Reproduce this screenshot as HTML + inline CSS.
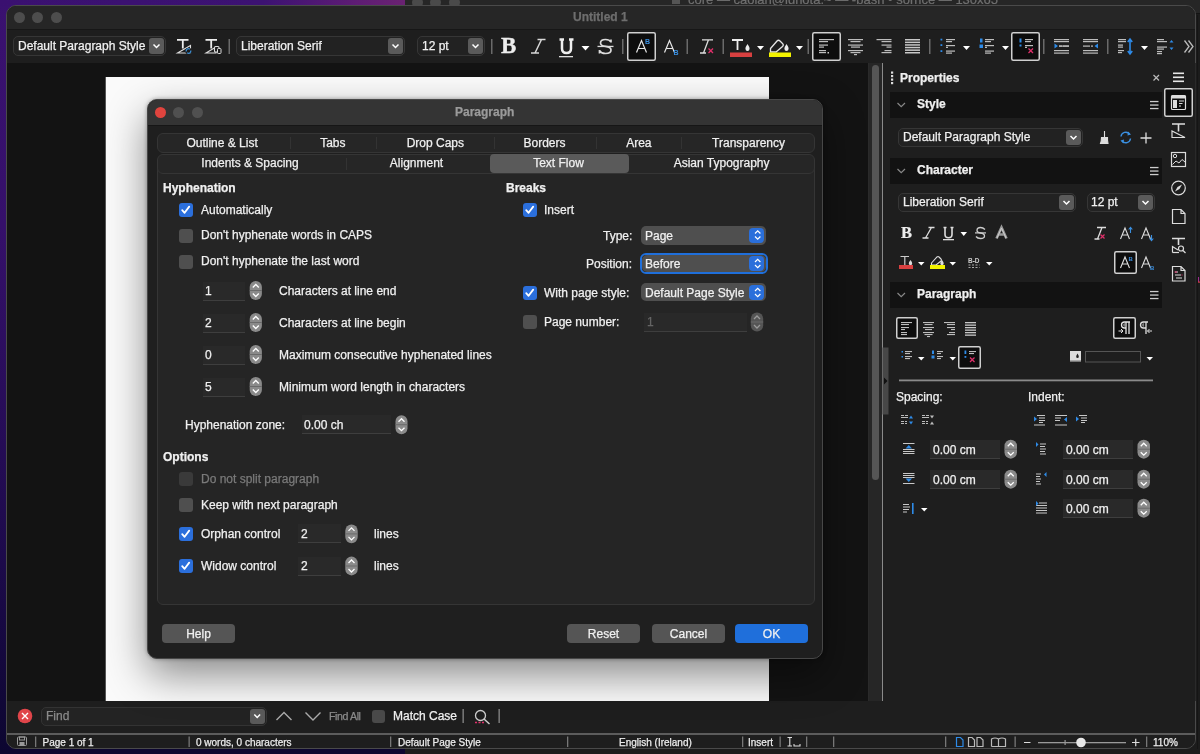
<!DOCTYPE html>
<html><head><meta charset="utf-8">
<style>
*{box-sizing:border-box;margin:0;padding:0}
html,body{width:1200px;height:754px;overflow:hidden;background:#1b1b1b;font-family:"Liberation Sans",sans-serif;font-size:12px;color:#f0f0f0}
body{will-change:transform}
.a{position:absolute}
.t{position:absolute;white-space:nowrap;line-height:14px;height:14px;-webkit-text-stroke:0.25px currentColor}
.b{font-weight:bold}
#desk{left:0;top:0;width:405px;height:754px;background:linear-gradient(to bottom,#3a1170 0,#35106a 30%,#1c0a4a 75%,#0c0630 100%)}
#desktop{left:0;top:0;width:405px;height:6px;background:linear-gradient(to right,#3a1070 0,#3c1272 65%,#5e1c74 88%,#6a2272 100%)}
#desk2{left:0;top:749px;width:405px;height:5px;background:#0c0630}
#term{left:405px;top:0;width:795px;height:754px;background:#1c1c1c}
#termtb{left:405px;top:0;width:795px;height:14px;background:#262626;border-bottom:1px solid #141414}
#win{left:6px;top:5px;width:1190px;height:744px;background:#1e1e1e;border:1px solid #4a4a4a;border-radius:10px;overflow:hidden}
#tbar{left:0;top:0;width:1190px;height:24px;background:#262626;border-bottom:1px solid #171717}
.tl{position:absolute;width:11px;height:11px;border-radius:50%;background:#4d4d4d}
#doc{left:0;top:57px;width:861px;height:638px;background:#131313}
#page{left:98px;top:14px;width:664px;height:624px;background:#fafafa;border-left:1px solid #555}
#scroll{left:861px;top:57px;width:15px;height:638px;background:#262626;border-left:1px solid #2a2a2a}
#side{left:875px;top:57px;width:315px;height:638px;background:#1e1e1e;border-left:1.5px solid #8a8a8a}
.band{position:absolute;left:6px;width:273px;height:26px;background:#111}
#find{left:0;top:695px;width:1190px;height:32px;background:#1e1e1e}
#status{left:0;top:727px;width:1190px;height:17px;background:#1e1e1e;border-top:2px solid #5c5c5c}
.combo{position:absolute;border:1px solid #333;border-radius:5px;background:#222}
.dd{position:absolute;width:15px;height:15px;background:#5a5a5a;border-radius:3px}
.sep{position:absolute;width:2px;background:#777}
/* dialog */
#dlg{left:147px;top:99px;width:676px;height:560px;background:#1f1f1f;border:1px solid #474747;border-radius:10px;box-shadow:0 16px 40px rgba(0,0,0,.45),0 0 4px rgba(0,0,0,.35);overflow:hidden}
#dtitle{left:0;top:0;width:674px;height:26px;background:#343434;border-bottom:1px solid #161616}
.tabrow{position:absolute;left:9px;width:658px;height:20px;background:#262626;border:1px solid #353535;border-radius:6px}
.tab{position:absolute;top:0;height:18px;line-height:18px;text-align:center;white-space:nowrap}
#frame{left:9px;top:61px;width:658px;height:444px;background:#252525;border:1px solid #353535;border-radius:6px}
.cb{position:absolute;width:13.5px;height:13.5px;border-radius:3px;background:#4f4f4f}
.cb.on{background:#2b6fdc}
.field{position:absolute;background:#292929;border-bottom:1px solid #3e3e3e;height:19px}
.spin{position:absolute;width:12px;height:20px;background:#777;border-radius:6px}
.btn{position:absolute;height:18.5px;width:73px;background:#555;border-radius:4px;text-align:center;line-height:20.5px;color:#f0f0f0;-webkit-text-stroke:0.25px currentColor}
.pop{position:absolute;height:19px;background:#4f4f4f;border-radius:5px}
.popb{position:absolute;right:2px;top:2px;width:15px;height:15px;border-radius:4px;background:#2a6fdb}
</style></head><body>
<div id="desk" class="a"></div>
<div id="desk2" class="a"></div>
<div id="term" class="a"></div>
<div id="desktop" class="a"></div>
<div id="termtb" class="a"></div>
<div class="tl" style="left:412px;top:-3px;background:#4a4a4a"></div>
<div class="tl" style="left:430px;top:-3px;background:#4a4a4a"></div>
<div class="tl" style="left:449px;top:-3px;background:#4a4a4a"></div>
<div class="a" style="left:672px;top:-3px;width:8px;height:7px;background:#555"></div>
<div class="a" style="left:688px;top:-7px;white-space:nowrap;font-size:13px;line-height:14px;color:#707070;-webkit-text-stroke:0.2px #707070">core — caolan@idnota:~ — -bash • sorrice — 130x65</div>

<div id="win" class="a">
  <div id="tbar" class="a">
    <div class="tl" style="left:7px;top:6px"></div>
    <div class="tl" style="left:25px;top:6px"></div>
    <div class="tl" style="left:43.5px;top:6px"></div>
    <div class="t b" style="left:566px;top:4px;color:#6e6e6e">Untitled 1</div>
  </div>
  <div id="doc" class="a">
    <div id="page" class="a"></div>
  </div>
  <div id="scroll" class="a"><div class="a" style="left:3px;top:2px;width:7px;height:415px;border-radius:4px;background:#555"></div></div>
  <div id="side" class="a"></div>
  <div id="find" class="a"></div>
  <div id="status" class="a"></div>
</div>
<div class="combo" style="left:13px;top:36px;width:153px;height:20px;background:#222;border-color:#363636"></div>
<div class="dd" style="left:149px;top:38px;height:16px"></div>
<div class="t " style="left:18px;top:38.5px;">Default Paragraph Style</div>
<div class="combo" style="left:236px;top:36px;width:169px;height:20px;background:#222;border-color:#363636"></div>
<div class="dd" style="left:388px;top:38px;height:16px"></div>
<div class="t " style="left:241px;top:38.5px;">Liberation Serif</div>
<div class="combo" style="left:417px;top:36px;width:68px;height:20px;background:#222;border-color:#363636"></div>
<div class="dd" style="left:468px;top:38px;height:16px"></div>
<div class="t " style="left:422px;top:38.5px;">12 pt</div>
<div class="t" style="left:501px;top:34px;height:24px;line-height:24px;font-family:'Liberation Serif',serif;font-weight:bold;font-size:23px;color:#eee;-webkit-text-stroke:0.3px #eee">B</div>
<div class="t b" style="left:900px;top:71px;">Properties</div>
<div class="a" style="left:890px;top:92px;width:272px;height:26px;background:#121212"></div>
<div class="t b" style="left:917px;top:97.3px;">Style</div>
<div class="a" style="left:890px;top:158px;width:272px;height:26px;background:#121212"></div>
<div class="t b" style="left:917px;top:163.3px;">Character</div>
<div class="a" style="left:890px;top:282px;width:272px;height:26px;background:#121212"></div>
<div class="t b" style="left:917px;top:287.3px;">Paragraph</div>
<div class="combo" style="left:898px;top:128px;width:185px;height:19px;background:#222;border-color:#363636"></div>
<div class="dd" style="left:1066px;top:130px;height:15px"></div>
<div class="t " style="left:903px;top:130px;">Default Paragraph Style</div>
<div class="combo" style="left:898px;top:193px;width:178px;height:19px;background:#222;border-color:#363636"></div>
<div class="dd" style="left:1059px;top:195px;height:15px"></div>
<div class="t " style="left:903px;top:195px;">Liberation Serif</div>
<div class="combo" style="left:1087px;top:193px;width:68px;height:19px;background:#222;border-color:#363636"></div>
<div class="dd" style="left:1138px;top:195px;height:15px"></div>
<div class="t " style="left:1091px;top:195px;">12 pt</div>
<div class="t" style="left:901px;top:222.5px;height:20px;line-height:20px;font-family:'Liberation Serif',serif;font-weight:bold;font-size:16.5px;color:#eee;-webkit-text-stroke:0.2px #eee">B</div>
<div class="t " style="left:896px;top:389.7px;">Spacing:</div>
<div class="t " style="left:1028px;top:389.7px;">Indent:</div>
<div class="field" style="left:930px;top:440px;width:70px;height:18.5px"></div>
<div class="t " style="left:933px;top:442.55px;">0.00 cm</div>
<div class="field" style="left:930px;top:470px;width:70px;height:18.5px"></div>
<div class="t " style="left:933px;top:472.55px;">0.00 cm</div>
<div class="field" style="left:1063px;top:440px;width:70px;height:18.5px"></div>
<div class="t " style="left:1066px;top:442.55px;">0.00 cm</div>
<div class="field" style="left:1063px;top:470px;width:70px;height:18.5px"></div>
<div class="t " style="left:1066px;top:472.55px;">0.00 cm</div>
<div class="field" style="left:1063px;top:499px;width:70px;height:18.5px"></div>
<div class="t " style="left:1066px;top:501.55px;">0.00 cm</div>
<div class="combo" style="left:41px;top:707px;width:226px;height:19px;background:#232323;border-color:#333"></div>
<div class="t " style="left:46px;top:709px;color:#8a8a8a">Find</div>
<div class="dd" style="left:250px;top:709px;height:14.5px;width:14.5px"></div>
<div class="t" style="left:329px;top:709px;font-size:10.6px;letter-spacing:-0.4px;color:#8c8c8c">Find All</div>
<div class="cb" style="left:372px;top:709.5px;width:12.5px;height:13px;background:#4a4a4a"></div>
<div class="t " style="left:393px;top:708.5px;color:#f2f2f2">Match Case</div>
<div class="t" style="left:42.5px;top:736px;font-size:10px;line-height:14px;color:#ececec;">Page 1 of 1</div>
<div class="t" style="left:196px;top:736px;font-size:10px;line-height:14px;color:#ececec;">0 words, 0 characters</div>
<div class="t" style="left:398px;top:736px;font-size:10px;line-height:14px;color:#ececec;">Default Page Style</div>
<div class="t" style="left:619px;top:736px;font-size:10px;line-height:14px;color:#ececec;">English (Ireland)</div>
<div class="t" style="left:748px;top:736px;font-size:10px;line-height:14px;color:#ececec;">Insert</div>
<div class="t" style="left:1153px;top:736px;font-size:10px;line-height:14px;color:#ececec;">110%</div>

<div id="dlg" class="a">
  <div id="dtitle" class="a">
    <div class="tl" style="left:7px;top:6.5px;background:#e0443e"></div>
    <div class="tl" style="left:25px;top:6.5px;background:#505050"></div>
    <div class="tl" style="left:43.5px;top:6.5px;background:#505050"></div>
    <div class="t b" style="left:307px;top:5px;color:#9a9a9a">Paragraph</div>
  </div>
  <div class="tabrow" style="top:33px">
    <div class="a" style="left:132px;top:3px;width:1px;height:12px;background:#333"></div>
    <div class="a" style="left:218px;top:3px;width:1px;height:12px;background:#333"></div>
    <div class="a" style="left:336px;top:3px;width:1px;height:12px;background:#333"></div>
    <div class="a" style="left:438px;top:3px;width:1px;height:12px;background:#333"></div>
    <div class="a" style="left:523px;top:3px;width:1px;height:12px;background:#333"></div>
    <div class="t" style="left:28.4px;top:1.5px">Outline &amp; List</div>
    <div class="t" style="left:162.2px;top:1.5px">Tabs</div>
    <div class="t" style="left:248.7px;top:1.5px">Drop Caps</div>
    <div class="t" style="left:365.5px;top:1.5px">Borders</div>
    <div class="t" style="left:468.2px;top:1.5px">Area</div>
    <div class="t" style="left:554.1px;top:1.5px">Transparency</div>
  </div>
  <div id="frame" class="a"></div>
  <div class="tabrow" style="top:54px">
    <div class="a" style="left:188px;top:3px;width:1px;height:12px;background:#333"></div>
    <div class="t" style="left:43.3px;top:1px">Indents &amp; Spacing</div>
    <div class="t" style="left:231.8px;top:1px">Alignment</div>
    <div class="a" style="left:332px;top:-1px;width:139px;height:19px;background:#5a5a5a;border-radius:4px"></div>
    <div class="t" style="left:375.2px;top:1px">Text Flow</div>
    <div class="t" style="left:515.7px;top:1px">Asian Typography</div>
  </div>
</div>


<!-- dialog contents -->
<div class="t b" style="left:163px;top:181px">Hyphenation</div>
<div class="cb on" style="left:179px;top:203px"><svg width="13" height="13" class="a" style="left:0;top:0"><path d="M3.2 7.2 L5.6 9.8 L10.2 3.6" stroke="#fff" stroke-width="1.8" fill="none" stroke-linecap="round" stroke-linejoin="round"/></svg></div>
<div class="t" style="left:201px;top:203px">Automatically</div>
<div class="cb" style="left:179px;top:229px"></div>
<div class="t" style="left:201px;top:228px">Don't hyphenate words in CAPS</div>
<div class="cb" style="left:179px;top:255px"></div>
<div class="t" style="left:201px;top:254px">Don't hyphenate the last word</div>

<div class="field" style="left:203px;top:282px;width:42px"></div><div class="t" style="left:205px;top:284px">1</div>
<div class="t" style="left:279px;top:284px">Characters at line end</div>
<div class="field" style="left:203px;top:314px;width:42px"></div><div class="t" style="left:205px;top:316px">2</div>
<div class="t" style="left:279px;top:316px">Characters at line begin</div>
<div class="field" style="left:203px;top:346px;width:42px"></div><div class="t" style="left:205px;top:348px">0</div>
<div class="t" style="left:279px;top:348px">Maximum consecutive hyphenated lines</div>
<div class="field" style="left:203px;top:378px;width:42px"></div><div class="t" style="left:205px;top:380px">5</div>
<div class="t" style="left:279px;top:380px">Minimum word length in characters</div>

<div class="t" style="left:185px;top:418px">Hyphenation zone:</div>
<div class="field" style="left:302px;top:415px;width:89px"></div><div class="t" style="left:304px;top:418px">0.00 ch</div>

<div class="t b" style="left:163px;top:450px">Options</div>
<div class="cb" style="left:179px;top:472px;background:#3a3a3a"></div>
<div class="t" style="left:201px;top:472px;color:#7a7a7a">Do not split paragraph</div>
<div class="cb" style="left:179px;top:498px"></div>
<div class="t" style="left:201px;top:498px">Keep with next paragraph</div>
<div class="cb on" style="left:179px;top:527px"><svg width="13" height="13" class="a" style="left:0;top:0"><path d="M3.2 7.2 L5.6 9.8 L10.2 3.6" stroke="#fff" stroke-width="1.8" fill="none" stroke-linecap="round" stroke-linejoin="round"/></svg></div>
<div class="t" style="left:201px;top:527px">Orphan control</div>
<div class="field" style="left:298px;top:524px;width:43px"></div><div class="t" style="left:301px;top:527px">2</div>
<div class="t" style="left:374px;top:527px">lines</div>
<div class="cb on" style="left:179px;top:559px"><svg width="13" height="13" class="a" style="left:0;top:0"><path d="M3.2 7.2 L5.6 9.8 L10.2 3.6" stroke="#fff" stroke-width="1.8" fill="none" stroke-linecap="round" stroke-linejoin="round"/></svg></div>
<div class="t" style="left:201px;top:559px">Widow control</div>
<div class="field" style="left:298px;top:557px;width:43px;height:18.5px"></div><div class="t" style="left:301px;top:559px">2</div>
<div class="t" style="left:374px;top:559px">lines</div>

<div class="t b" style="left:506px;top:181px">Breaks</div>
<div class="cb on" style="left:523px;top:203px"><svg width="13" height="13" class="a" style="left:0;top:0"><path d="M3.2 7.2 L5.6 9.8 L10.2 3.6" stroke="#fff" stroke-width="1.8" fill="none" stroke-linecap="round" stroke-linejoin="round"/></svg></div>
<div class="t" style="left:544px;top:203px">Insert</div>
<div class="t" style="left:603px;top:229px">Type:</div>
<div class="pop" style="left:641px;top:226px;width:125px"><div class="popb"></div></div>
<div class="t" style="left:645px;top:229px">Page</div>
<div class="t" style="left:586px;top:257px">Position:</div>
<div class="a" style="left:640px;top:253px;width:128px;height:21px;border:2px solid #1f6fdb;border-radius:6px"></div>
<div class="pop" style="left:642px;top:255px;width:124px;height:17px"><div class="popb" style="top:1px"></div></div>
<div class="t" style="left:645px;top:257px">Before</div>
<div class="cb on" style="left:523px;top:286px"><svg width="13" height="13" class="a" style="left:0;top:0"><path d="M3.2 7.2 L5.6 9.8 L10.2 3.6" stroke="#fff" stroke-width="1.8" fill="none" stroke-linecap="round" stroke-linejoin="round"/></svg></div>
<div class="t" style="left:544px;top:286px">With page style:</div>
<div class="pop" style="left:641px;top:283px;width:125px;height:18px"><div class="popb" style="top:1.5px"></div></div>
<div class="t" style="left:645px;top:286px">Default Page Style</div>
<div class="cb" style="left:523px;top:315px"></div>
<div class="t" style="left:544px;top:315px">Page number:</div>
<div class="field" style="left:644px;top:313px;width:103px"></div><div class="t" style="left:647px;top:315px;color:#666">1</div>

<div class="btn" style="left:162px;top:624px">Help</div>
<div class="btn" style="left:567px;top:624px">Reset</div>
<div class="btn" style="left:652px;top:624px">Cancel</div>
<div class="btn" style="left:735px;top:624px;background:#1f6fdb">OK</div>
<svg class="a" style="left:0;top:0" width="1200" height="754" shape-rendering="geometricPrecision"><path d="M153.5 44.5 L156.5 47.5 L159.5 44.5" stroke="#fff" stroke-width="1.5" fill="none"/>
<path d="M177 39.8 H188.5 M182.8 39.8 V48.5" stroke="#eee" stroke-width="1.8" fill="none"/>
<path d="M177.5 53 L190.5 45.5 V53 Z" stroke="#ddd" stroke-width="1.1" fill="none"/>
<circle cx="188.5" cy="51" r="3.2" fill="#1d1d1d"/><path d="M186.3 51.5 A2.2 2.2 0 0 1 189.8 49.2 M190.7 50.5 A2.2 2.2 0 0 1 187.2 52.8" stroke="#3a8fd6" stroke-width="1.3" fill="none"/>
<path d="M205.5 39.8 H217 M211.2 39.8 V48.5" stroke="#eee" stroke-width="1.8" fill="none"/>
<path d="M206 53 L216 47 V53 Z" stroke="#ddd" stroke-width="1.1" fill="none"/>
<rect x="214.5" y="46.5" width="4.5" height="5.5" rx="1" stroke="#ddd" stroke-width="1.1" fill="#1d1d1d"/><rect x="217.5" y="48.5" width="3.5" height="5" rx="0.8" stroke="#ddd" stroke-width="1" fill="#1d1d1d"/>
<rect x="228.5" y="39" width="1.5" height="15" fill="#6a6a6a"/>
<path d="M392.5 44.5 L395.5 47.5 L398.5 44.5" stroke="#fff" stroke-width="1.5" fill="none"/>
<path d="M472.5 44.5 L475.5 47.5 L478.5 44.5" stroke="#fff" stroke-width="1.5" fill="none"/>
<rect x="491" y="39" width="1.5" height="15" fill="#6a6a6a"/>
<path d="M537.5 39.5 H545.5 M541.5 39.5 L535 53 M531 53 H539" stroke="#d8d8d8" stroke-width="1.5" fill="none"/>
<path d="M562 39.5 V48.5 Q562 53 566.5 53 Q571 53 571 48.5 V39.5 M559.5 39.5 H564 M569 39.5 H573.5" stroke="#eee" stroke-width="2.5" fill="none"/>
<rect x="559" y="56" width="14" height="1.3" fill="#ddd"/>
<path d="M581.5 46 L589.5 46 L585.5 50.5 Z" fill="#fff"/>
<path d="M611 42 Q609.5 39.5 605.5 39.5 Q600.5 39.5 600.5 43 Q600.5 45.8 605.5 46.3 Q611 47 611 50 Q611 53.5 605.5 53.5 Q601 53.5 599.5 50.5 M611 39.5 V42.5 M599.5 53.5 V50" stroke="#dcdcdc" stroke-width="1.7" fill="none"/>
<rect x="597.5" y="45.8" width="16" height="1.3" fill="#dcdcdc"/>
<rect x="622" y="39" width="1.5" height="15" fill="#6a6a6a"/>
<rect x="627.75" y="32.75" width="27.5" height="27.5" rx="1.5" fill="#0d0d0d" stroke="#d0d0d0" stroke-width="1.5"/>
<path d="M636.5 52.5 L641.5 40.5 L646.5 52.5 M638.3 48.5 H644.7" stroke="#e6e6e6" stroke-width="1.2" fill="none"/>
<text x="645" y="43.5" font-family="Liberation Sans" font-size="7" font-weight="bold" fill="#3a8fe0">B</text>
<path d="M664.5 52.5 L669.5 40.5 L674.5 52.5 M666.3 48.5 H672.7" stroke="#e6e6e6" stroke-width="1.2" fill="none"/>
<text x="673.5" y="55" font-family="Liberation Sans" font-size="7" font-weight="bold" fill="#3a8fe0">B</text>
<rect x="686.5" y="39" width="1.5" height="15" fill="#6a6a6a"/>
<path d="M702 39.8 H713 M708.5 39.8 L703.5 53 M700 53 H706" stroke="#ddd" stroke-width="1.3" fill="none"/>
<path d="M708.5 48.5 L713 53 M713 48.5 L708.5 53" stroke="#e0306a" stroke-width="1.3"/>
<rect x="722.5" y="39" width="1.5" height="15" fill="#6a6a6a"/>
<path d="M732 40 H743 M737.5 40 V50" stroke="#eee" stroke-width="1.8" fill="none"/>
<path d="M747.5 44 Q745 47.5 745.5 49 A2 2 0 0 0 749.5 49 Q750 47.5 747.5 44 Z" fill="#eee"/>
<rect x="730" y="52.5" width="22" height="4.5" fill="#d84040"/>
<path d="M757 46 L764 46 L760.5 50 Z" fill="#fff"/>
<path d="M770.5 48.5 L777 41 Q778.5 39.5 780 41 L782.5 43.5 Q784 45 782.5 46.5 L776 52 H770.5 Z" stroke="#e6e6e6" stroke-width="1.3" fill="none"/>
<path d="M786.5 44 Q784 47.5 784.5 49 A2 2 0 0 0 788.5 49 Q789 47.5 786.5 44 Z" fill="#eee"/>
<rect x="769" y="52.5" width="22" height="4.5" fill="#f2f200"/>
<path d="M796 46 L803 46 L799.5 50 Z" fill="#fff"/>
<rect x="807.5" y="39" width="1.5" height="15" fill="#6a6a6a"/>
<rect x="812.75" y="32.75" width="27.5" height="27.5" rx="1.5" fill="#0d0d0d" stroke="#d0d0d0" stroke-width="1.5"/>
<rect x="819" y="39" width="15" height="1.2" fill="#bdbdbd"/>
<rect x="819" y="41" width="9" height="1.2" fill="#bdbdbd"/>
<rect x="819" y="44.5" width="9" height="1.2" fill="#bdbdbd"/>
<rect x="819" y="46.5" width="5" height="1.2" fill="#bdbdbd"/>
<rect x="819" y="50" width="7" height="1.2" fill="#bdbdbd"/>
<rect x="819" y="52" width="7" height="1.2" fill="#bdbdbd"/>
<rect x="827.5" y="52" width="1.5" height="1.5" fill="#ccc"/>
<rect x="848.0" y="39" width="15" height="1.2" fill="#bdbdbd"/>
<rect x="850.5" y="41" width="10" height="1.2" fill="#bdbdbd"/>
<rect x="848.0" y="44.5" width="15" height="1.2" fill="#bdbdbd"/>
<rect x="851.0" y="46.5" width="9" height="1.2" fill="#bdbdbd"/>
<rect x="848.0" y="50" width="15" height="1.2" fill="#bdbdbd"/>
<rect x="850.5" y="52" width="10" height="1.2" fill="#bdbdbd"/>
<rect x="854.0" y="54" width="3" height="1.2" fill="#bdbdbd"/>
<rect x="876.5" y="39" width="15" height="1.2" fill="#bdbdbd"/>
<rect x="881.5" y="41" width="10" height="1.2" fill="#bdbdbd"/>
<rect x="881.5" y="44.5" width="10" height="1.2" fill="#bdbdbd"/>
<rect x="886.5" y="46.5" width="5" height="1.2" fill="#bdbdbd"/>
<rect x="884.5" y="50" width="7" height="1.2" fill="#bdbdbd"/>
<rect x="881.5" y="52" width="10" height="1.2" fill="#bdbdbd"/>
<rect x="905" y="39" width="15" height="1.5" fill="#c8c8c8"/>
<rect x="905" y="41.6" width="15" height="1.5" fill="#c8c8c8"/>
<rect x="905" y="44.2" width="15" height="1.5" fill="#c8c8c8"/>
<rect x="905" y="46.8" width="15" height="1.5" fill="#c8c8c8"/>
<rect x="905" y="49.4" width="15" height="1.5" fill="#c8c8c8"/>
<rect x="905" y="52" width="15" height="1.5" fill="#c8c8c8"/>
<rect x="929" y="39" width="1.5" height="15" fill="#6a6a6a"/>
<rect x="940.5" y="38.7" width="1.8" height="1.8" fill="#2e8be8"/>
<rect x="940.5" y="44.2" width="1.8" height="1.8" fill="#2e8be8"/>
<rect x="940.5" y="50.2" width="1.8" height="1.8" fill="#2e8be8"/>
<rect x="946" y="39" width="9" height="1.2" fill="#bdbdbd"/>
<rect x="946" y="41" width="6" height="1.2" fill="#bdbdbd"/>
<rect x="946" y="45" width="9" height="1.2" fill="#bdbdbd"/>
<rect x="946" y="46.8" width="2" height="1.2" fill="#bdbdbd"/>
<rect x="946" y="50.5" width="9" height="1.2" fill="#bdbdbd"/>
<rect x="946" y="52.5" width="6" height="1.2" fill="#bdbdbd"/>
<path d="M963 46 L970 46 L966.5 50 Z" fill="#fff"/>
<rect x="980" y="38.5" width="2.5" height="4" fill="#2e8be8"/><rect x="979.5" y="44.5" width="3.5" height="3.5" fill="#2e8be8"/>
<rect x="985" y="39" width="9" height="1.2" fill="#bdbdbd"/>
<rect x="985" y="41" width="6" height="1.2" fill="#bdbdbd"/>
<rect x="985" y="45" width="9" height="1.2" fill="#bdbdbd"/>
<rect x="985" y="46.8" width="2" height="1.2" fill="#bdbdbd"/>
<rect x="985" y="50.5" width="9" height="1.2" fill="#bdbdbd"/>
<rect x="985" y="52.5" width="6" height="1.2" fill="#bdbdbd"/>
<path d="M1002 46 L1009 46 L1005.5 50 Z" fill="#fff"/>
<rect x="1011.75" y="32.75" width="27.5" height="27.5" rx="1.5" fill="#0d0d0d" stroke="#d0d0d0" stroke-width="1.5"/>
<rect x="1019.5" y="38.5" width="2" height="4" fill="#2e8be8"/><rect x="1019.5" y="44.5" width="2" height="2" fill="#2e8be8"/>
<rect x="1025" y="39" width="8" height="1.2" fill="#bdbdbd"/>
<rect x="1025" y="41" width="6" height="1.2" fill="#bdbdbd"/>
<rect x="1025" y="45" width="8" height="1.2" fill="#bdbdbd"/>
<rect x="1025" y="46.8" width="2" height="1.2" fill="#bdbdbd"/>
<path d="M1028.5 48.5 L1033 53 M1033 48.5 L1028.5 53" stroke="#e0306a" stroke-width="1.3"/>
<rect x="1043" y="39" width="1.5" height="15" fill="#6a6a6a"/>
<rect x="1054" y="39" width="15" height="1.2" fill="#bdbdbd"/>
<rect x="1054" y="41" width="15" height="1.2" fill="#bdbdbd"/>
<rect x="1054" y="50" width="15" height="1.2" fill="#bdbdbd"/>
<rect x="1054" y="52.5" width="15" height="1.2" fill="#bdbdbd"/>
<rect x="1059" y="45.5" width="10" height="1.2" fill="#bdbdbd"/>
<rect x="1059" y="47.5" width="0" height="1.2" fill="#bdbdbd"/>
<rect x="1059" y="45.5" width="3" height="1.2" fill="#bdbdbd"/><rect x="1063" y="45.5" width="6" height="1.2" fill="#bdbdbd"/>
<path d="M1054.5 43.5 L1058 46 L1054.5 48.5 Z" fill="#2e8be8"/>
<rect x="1083" y="39" width="15" height="1.2" fill="#bdbdbd"/>
<rect x="1083" y="41" width="15" height="1.2" fill="#bdbdbd"/>
<rect x="1083" y="50" width="15" height="1.2" fill="#bdbdbd"/>
<rect x="1083" y="52.5" width="15" height="1.2" fill="#bdbdbd"/>
<rect x="1083" y="45.5" width="7" height="1.2" fill="#bdbdbd"/><rect x="1091" y="45.5" width="2" height="1.2" fill="#bdbdbd"/>
<path d="M1098 43.5 L1094.5 46 L1098 48.5 Z" fill="#2e8be8"/>
<rect x="1107" y="39" width="1.5" height="15" fill="#6a6a6a"/>
<rect x="1118" y="39" width="8" height="1.2" fill="#bdbdbd"/>
<rect x="1118" y="41" width="8" height="1.2" fill="#bdbdbd"/>
<rect x="1118" y="44.5" width="5" height="1.2" fill="#bdbdbd"/>
<rect x="1118" y="46.5" width="5" height="1.2" fill="#bdbdbd"/>
<rect x="1118" y="50" width="6" height="1.2" fill="#bdbdbd"/>
<rect x="1118" y="52" width="4" height="1.2" fill="#bdbdbd"/>
<path d="M1130 40 V53 M1127.8 42 L1130 39 L1132.2 42 M1127.8 51 L1130 54 L1132.2 51" stroke="#2e8be8" stroke-width="1.6" fill="none"/>
<path d="M1141 46 L1148 46 L1144.5 50 Z" fill="#fff"/>
<rect x="1157" y="39" width="7" height="1.2" fill="#bdbdbd"/>
<rect x="1157" y="41" width="10" height="1.2" fill="#bdbdbd"/>
<rect x="1157" y="46.5" width="10" height="1.2" fill="#bdbdbd"/>
<rect x="1157" y="48.5" width="7" height="1.2" fill="#bdbdbd"/>
<rect x="1157" y="51" width="5" height="1.2" fill="#bdbdbd"/>
<rect x="1157" y="53" width="5" height="1.2" fill="#bdbdbd"/>
<path d="M1169.5 42.5 L1171.5 40 L1173.5 42.5 Z M1169.5 47.5 L1171.5 50 L1173.5 47.5 Z" fill="#2e8be8"/>
<path d="M1184.5 40.5 L1189 46.5 L1184.5 52.5 M1188.5 40.5 L1193 46.5 L1188.5 52.5" stroke="#bbb" stroke-width="1.3" fill="none"/>
<rect x="891" y="71.5" width="2.2" height="2.2" fill="#ddd"/>
<rect x="891" y="75" width="2.2" height="2.2" fill="#ddd"/>
<rect x="891" y="78.5" width="2.2" height="2.2" fill="#ddd"/>
<rect x="891" y="82" width="2.2" height="2.2" fill="#ddd"/>
<path d="M1153.5 75 L1159 80.5 M1159 75 L1153.5 80.5" stroke="#bbb" stroke-width="1.2"/>
<rect x="1173" y="72.5" width="11" height="1.6" fill="#e6e6e6"/>
<rect x="1173" y="76.5" width="11" height="1.6" fill="#e6e6e6"/>
<rect x="1173" y="80.5" width="11" height="1.6" fill="#e6e6e6"/>
<path d="M897.5 103 L901.2 106.7 L905 103" stroke="#888" stroke-width="1.2" fill="none"/>
<rect x="1150" y="100.9" width="8.5" height="1.3" fill="#ccc"/>
<rect x="1150" y="104.4" width="8.5" height="1.3" fill="#ccc"/>
<rect x="1150" y="107.9" width="8.5" height="1.3" fill="#ccc"/>
<path d="M897.5 169 L901.2 172.7 L905 169" stroke="#888" stroke-width="1.2" fill="none"/>
<rect x="1150" y="166.9" width="8.5" height="1.3" fill="#ccc"/>
<rect x="1150" y="170.4" width="8.5" height="1.3" fill="#ccc"/>
<rect x="1150" y="173.9" width="8.5" height="1.3" fill="#ccc"/>
<path d="M897.5 293 L901.2 296.7 L905 293" stroke="#888" stroke-width="1.2" fill="none"/>
<rect x="1150" y="290.9" width="8.5" height="1.3" fill="#ccc"/>
<rect x="1150" y="294.4" width="8.5" height="1.3" fill="#ccc"/>
<rect x="1150" y="297.9" width="8.5" height="1.3" fill="#ccc"/>
<path d="M1070.5 136.0 L1073.5 139.0 L1076.5 136.0" stroke="#fff" stroke-width="1.5" fill="none"/>
<path d="M1104.5 131 V137 M1101.5 137.5 H1107.5 V140 L1108 143.5 H1100.5 Q1101.5 141 1101.5 137.5 Z" stroke="#ddd" stroke-width="1.1" fill="#ddd"/>
<path d="M1121 136.5 A4.8 4.8 0 0 1 1129.5 134 M1130.5 138.5 A4.8 4.8 0 0 1 1122 141" stroke="#3a8fe0" stroke-width="1.4" fill="none"/>
<path d="M1128 131.5 L1131 134.5 L1127.5 135.5 Z M1123.5 143.5 L1120.5 140.5 L1124 139.5 Z" fill="#3a8fe0"/>
<path d="M1146 132.5 V143.5 M1140.5 138 H1151.5" stroke="#ddd" stroke-width="1.3"/>
<path d="M1063.5 201.0 L1066.5 204.0 L1069.5 201.0" stroke="#fff" stroke-width="1.5" fill="none"/>
<path d="M1142.5 201.0 L1145.5 204.0 L1148.5 201.0" stroke="#fff" stroke-width="1.5" fill="none"/>
<path d="M928.5 227.5 H934.5 M931.5 227.5 L925.5 238 M922.5 238 H928.5" stroke="#ddd" stroke-width="1.3" fill="none"/>
<path d="M945 227.5 V234.5 Q945 237.8 948.5 237.8 Q952 237.8 952 234.5 V227.5 M943.5 227.5 H946.5 M950.5 227.5 H953.5" stroke="#ddd" stroke-width="1.6" fill="none"/><rect x="943" y="239" width="11" height="1.3" fill="#ddd"/>
<path d="M960.5 232 L967.0 232 L963.75 236 Z" fill="#fff"/>
<path d="M985 229.5 Q983 227.5 980.5 227.5 Q977 227.5 977 230.5 Q977 232.5 980.5 233 Q984.5 233.5 984.5 236 Q984.5 238.5 980.5 238.5 Q977.5 238.5 976 236.5" stroke="#ccc" stroke-width="1.3" fill="none"/><rect x="975" y="232.3" width="11" height="1.2" fill="#ccc"/>
<path d="M996.5 238.5 L1001.5 227.5 L1006.5 238.5 M998.5 234.5 H1004.5" stroke="#999" stroke-width="2.6" fill="none"/><path d="M997 238 L1001.5 228 L1006 238" stroke="#ccc" stroke-width="1" fill="none"/>
<path d="M1097 227.5 H1106 M1102 227.5 L1097.5 239 M1094.5 239 H1099.5" stroke="#ddd" stroke-width="1.3" fill="none"/><path d="M1100.5 234.5 L1104.5 238.5 M1104.5 234.5 L1100.5 238.5" stroke="#e0306a" stroke-width="1.2"/>
<path d="M1120.5 239 L1125 228 L1129.5 239 M1122.3 235 H1127.7" stroke="#ddd" stroke-width="1.1" fill="none"/><path d="M1130.5 233 V227.5 M1128.7 229.5 L1130.5 227.3 L1132.3 229.5" stroke="#3a8fe0" stroke-width="1.1" fill="none"/>
<path d="M1141.5 239 L1146 228 L1150.5 239 M1143.3 235 H1148.7" stroke="#ddd" stroke-width="1.1" fill="none"/><path d="M1151.5 235 V240.5 M1149.7 238.5 L1151.5 240.7 L1153.3 238.5" stroke="#3a8fe0" stroke-width="1.1" fill="none"/>
<path d="M900.5 256.5 H909 M904.8 256.5 V265" stroke="#ccc" stroke-width="1.2" fill="none"/><path d="M910.5 260 Q908.5 262.5 908.8 263.5 A1.7 1.7 0 0 0 912.2 263.5 Q912.5 262.5 910.5 260 Z" fill="#ddd"/><rect x="899" y="265" width="14" height="4" fill="#d84040"/>
<path d="M918 262 L924.5 262 L921.25 265.5 Z" fill="#fff"/>
<path d="M931.5 263 L937 257 Q938 256 939 257 L941 259 Q942 260 941 261 L936 265 H931.5 Z" stroke="#ddd" stroke-width="1.1" fill="none"/><path d="M942 260 Q940 262.5 940.3 263.5 A1.7 1.7 0 0 0 943.7 263.5 Q944 262.5 942 260 Z" fill="#ddd"/><rect x="930" y="265" width="15" height="4" fill="#f2f200"/>
<path d="M949.5 262 L956.0 262 L952.75 265.5 Z" fill="#fff"/>
<text x="968" y="263" font-family="Liberation Sans" font-size="6.5" font-weight="bold" fill="#ccc">B-D</text><path d="M968.5 265 H979.5 M968.5 267.5 H979.5" stroke="#aaa" stroke-width="1" stroke-dasharray="2 1.5"/>
<path d="M986 262 L992.5 262 L989.25 265.5 Z" fill="#fff"/>
<rect x="1114.75" y="251.75" width="21.5" height="21.5" rx="1.5" fill="#0d0d0d" stroke="#d0d0d0" stroke-width="1.5"/>
<path d="M1120.5 268 L1125 257 L1129.5 268 M1122.3 264 H1127.7" stroke="#e0e0e0" stroke-width="1.1" fill="none"/><text x="1128.5" y="261" font-family="Liberation Sans" font-size="6" font-weight="bold" fill="#3a8fe0">B</text>
<path d="M1141.5 268 L1146 257 L1150.5 268 M1143.3 264 H1148.7" stroke="#ddd" stroke-width="1.1" fill="none"/><text x="1150" y="270" font-family="Liberation Sans" font-size="6" font-weight="bold" fill="#3a8fe0">B</text>
<rect x="896.75" y="317.75" width="20.5" height="20.5" rx="1.5" fill="#0d0d0d" stroke="#d0d0d0" stroke-width="1.5"/>
<rect x="901" y="322" width="11" height="1.1" fill="#bdbdbd"/>
<rect x="901" y="324" width="8" height="1.1" fill="#bdbdbd"/>
<rect x="901" y="327" width="8" height="1.1" fill="#bdbdbd"/>
<rect x="901" y="329" width="4" height="1.1" fill="#bdbdbd"/>
<rect x="901" y="332" width="6" height="1.1" fill="#bdbdbd"/>
<rect x="901" y="334" width="6" height="1.1" fill="#bdbdbd"/>
<rect x="923.0" y="322" width="11" height="1.1" fill="#bdbdbd"/>
<rect x="924.5" y="324" width="8" height="1.1" fill="#bdbdbd"/>
<rect x="923.0" y="327" width="11" height="1.1" fill="#bdbdbd"/>
<rect x="925.0" y="329" width="7" height="1.1" fill="#bdbdbd"/>
<rect x="923.0" y="332" width="11" height="1.1" fill="#bdbdbd"/>
<rect x="924.5" y="334" width="8" height="1.1" fill="#bdbdbd"/>
<rect x="927.0" y="336" width="3" height="1.1" fill="#bdbdbd"/>
<rect x="944" y="322" width="11" height="1.1" fill="#bdbdbd"/>
<rect x="947" y="324" width="8" height="1.1" fill="#bdbdbd"/>
<rect x="947" y="327" width="8" height="1.1" fill="#bdbdbd"/>
<rect x="951" y="329" width="4" height="1.1" fill="#bdbdbd"/>
<rect x="949" y="332" width="6" height="1.1" fill="#bdbdbd"/>
<rect x="947" y="334" width="8" height="1.1" fill="#bdbdbd"/>
<rect x="965" y="322" width="11" height="1.3" fill="#c8c8c8"/>
<rect x="965" y="324.5" width="11" height="1.3" fill="#c8c8c8"/>
<rect x="965" y="327" width="11" height="1.3" fill="#c8c8c8"/>
<rect x="965" y="329.5" width="11" height="1.3" fill="#c8c8c8"/>
<rect x="965" y="332" width="11" height="1.3" fill="#c8c8c8"/>
<rect x="965" y="334.5" width="11" height="1.3" fill="#c8c8c8"/>
<rect x="1113.75" y="317.75" width="21.5" height="20.5" rx="1.5" fill="#0d0d0d" stroke="#d0d0d0" stroke-width="1.5"/>
<path d="M1126 322 V334 M1129 322 V334 M1130 322 H1124.5 A3 3 0 0 0 1124.5 328 H1126" stroke="#e6e6e6" stroke-width="1.3" fill="none"/><path d="M1124.5 323 A2.5 2.5 0 0 0 1124.5 327 Z" fill="#e6e6e6"/><path d="M1118.5 331 H1123 M1121 329 L1123 331 L1121 333" stroke="#e6e6e6" stroke-width="1" fill="none"/>
<path d="M1146 322 V334 M1143.5 322 H1148 M1143.5 322 A3 3 0 0 0 1143.5 328 H1146" stroke="#ddd" stroke-width="1.3" fill="none"/><path d="M1143.5 323 A2.5 2.5 0 0 0 1143.5 327 Z" fill="#ddd"/><path d="M1152 331 H1147.5 M1149.5 329 L1147.5 331 L1149.5 333" stroke="#ddd" stroke-width="1" fill="none"/>
<rect x="901.5" y="351" width="1.5" height="1.5" fill="#2e8be8"/><rect x="901.5" y="356" width="1.5" height="1.5" fill="#2e8be8"/>
<rect x="905" y="351" width="7" height="1.1" fill="#bdbdbd"/>
<rect x="905" y="353" width="5" height="1.1" fill="#bdbdbd"/>
<rect x="905" y="356" width="7" height="1.1" fill="#bdbdbd"/>
<rect x="905" y="358" width="5" height="1.1" fill="#bdbdbd"/>
<path d="M918 357 L924.5 357 L921.25 360.5 Z" fill="#fff"/>
<rect x="932" y="350.5" width="2" height="3.5" fill="#2e8be8"/><rect x="931.5" y="355.5" width="3" height="3" fill="#2e8be8"/>
<rect x="937" y="351" width="6" height="1.1" fill="#bdbdbd"/>
<rect x="937" y="353" width="4" height="1.1" fill="#bdbdbd"/>
<rect x="937" y="356" width="6" height="1.1" fill="#bdbdbd"/>
<rect x="937" y="358" width="4" height="1.1" fill="#bdbdbd"/>
<path d="M949.5 357 L956.0 357 L952.75 360.5 Z" fill="#fff"/>
<rect x="958.75" y="346.75" width="21.5" height="21.5" rx="1.5" fill="#0d0d0d" stroke="#d0d0d0" stroke-width="1.5"/>
<rect x="964.5" y="350.5" width="1.8" height="3.5" fill="#2e8be8"/><rect x="964.5" y="356" width="1.8" height="1.8" fill="#2e8be8"/>
<rect x="969" y="351" width="7" height="1.1" fill="#bdbdbd"/>
<rect x="969" y="353" width="5" height="1.1" fill="#bdbdbd"/>
<path d="M970 357.5 L974.5 362 M974.5 357.5 L970 362" stroke="#e0306a" stroke-width="1.3"/>
<rect x="1070" y="351" width="11" height="11" fill="#ddd"/><rect x="1070" y="360.5" width="11" height="1.5" fill="#777"/><path d="M1077.5 353.5 Q1076 355.8 1076.2 356.8 A1.3 1.3 0 0 0 1078.8 356.8 Q1079 355.8 1077.5 353.5 Z" fill="#222"/>
<rect x="1085.5" y="351.5" width="55" height="10.5" fill="none" stroke="#555" stroke-width="1"/>
<path d="M1146.5 357 L1153.0 357 L1149.75 360.5 Z" fill="#fff"/>
<rect x="899" y="379.5" width="254" height="1.8" fill="#8a8a8a"/>
<g transform="translate(0 0.5)"><path d="M901 415 H904 M905 415 H908 M901 417 H908" stroke="#bbb" stroke-width="1"/><path d="M909 418 L911 415 L913 418 Z" fill="#2e8be8"/><path d="M901 421 H904 M905 421 H907 M901 423 H904 M905 423 H907" stroke="#bbb" stroke-width="1"/><path d="M909 421 L911 424 L913 421 Z" fill="#2e8be8"/></g>
<g transform="translate(0 0.5)"><path d="M922 415 H925 M926 415 H929 M922 417 H929" stroke="#bbb" stroke-width="1"/><path d="M930 415 L932 418 L934 415 Z" fill="#bbb"/><path d="M922 421 H925 M926 421 H928 M922 423 H925 M926 423 H928" stroke="#bbb" stroke-width="1"/><path d="M930 424 L932 421 L934 424 Z" fill="#bbb"/></g>
<g transform="translate(0 0.5)"><path d="M903 443 H914.5 M903 449 H914.5 M903 451 H914.5 M903 453 H914.5" stroke="#c8c8c8" stroke-width="1"/><path d="M905.5 448 L908.8 444.5 L912 448 Z" fill="#2e8be8"/></g>
<g transform="translate(0 0.5)"><path d="M903 473 H914.5 M903 475 H914.5 M903 477 H914.5 M903 483 H914.5" stroke="#c8c8c8" stroke-width="1"/><path d="M905.5 478 L908.8 481.5 L912 478 Z" fill="#2e8be8"/></g>
<g transform="translate(0 0.5)"><path d="M903 504 H909 M903 506.5 H910 M903 509 H909 M903 511.5 H907" stroke="#c8c8c8" stroke-width="1"/><rect x="912" y="502.5" width="1.6" height="11" fill="#2e8be8"/></g>
<path d="M921 508 L927.5 508 L924.25 511.5 Z" fill="#fff"/>
<rect x="1004.5" y="439.7" width="12.5" height="19" rx="6.25" fill="#8a8a8a"/>
<rect x="1004.5" y="448.7" width="12.5" height="1" fill="#6a6a6a"/>
<path d="M1007.75 446.2 L1010.75 443.2 L1013.75 446.2 M1007.75 452.2 L1010.75 455.2 L1013.75 452.2" stroke="#fff" stroke-width="1.3" fill="none"/>
<rect x="1004.5" y="469.7" width="12.5" height="19" rx="6.25" fill="#8a8a8a"/>
<rect x="1004.5" y="478.7" width="12.5" height="1" fill="#6a6a6a"/>
<path d="M1007.75 476.2 L1010.75 473.2 L1013.75 476.2 M1007.75 482.2 L1010.75 485.2 L1013.75 482.2" stroke="#fff" stroke-width="1.3" fill="none"/>
<rect x="1137.5" y="439.7" width="12.5" height="19" rx="6.25" fill="#8a8a8a"/>
<rect x="1137.5" y="448.7" width="12.5" height="1" fill="#6a6a6a"/>
<path d="M1140.75 446.2 L1143.75 443.2 L1146.75 446.2 M1140.75 452.2 L1143.75 455.2 L1146.75 452.2" stroke="#fff" stroke-width="1.3" fill="none"/>
<rect x="1137.5" y="469.7" width="12.5" height="19" rx="6.25" fill="#8a8a8a"/>
<rect x="1137.5" y="478.7" width="12.5" height="1" fill="#6a6a6a"/>
<path d="M1140.75 476.2 L1143.75 473.2 L1146.75 476.2 M1140.75 482.2 L1143.75 485.2 L1146.75 482.2" stroke="#fff" stroke-width="1.3" fill="none"/>
<rect x="1137.5" y="498.7" width="12.5" height="19" rx="6.25" fill="#8a8a8a"/>
<rect x="1137.5" y="507.7" width="12.5" height="1" fill="#6a6a6a"/>
<path d="M1140.75 505.2 L1143.75 502.2 L1146.75 505.2 M1140.75 511.2 L1143.75 514.2 L1146.75 511.2" stroke="#fff" stroke-width="1.3" fill="none"/>
<g transform="translate(0 0.5)"><path d="M1037 415 H1045 M1039 417.5 H1045 M1039 420 H1045 M1039 422 H1043 M1034 424.5 H1045" stroke="#c8c8c8" stroke-width="1"/><path d="M1034 416 L1037 418.5 L1034 421 Z" fill="#2e8be8"/></g>
<g transform="translate(0 0.5)"><path d="M1055 415 H1067 M1055 417.5 H1061 M1055 420 H1060 M1055 424.5 H1067" stroke="#c8c8c8" stroke-width="1"/><path d="M1067 416.5 L1064 419 L1067 421.5 Z" fill="#2e8be8"/></g>
<g transform="translate(0 0.5)"><path d="M1079 415 H1087 M1081 417.5 H1087 M1081 420 H1087 M1081 422 H1085" stroke="#c8c8c8" stroke-width="1"/><path d="M1076 416 L1079 418.5 L1076 421 Z" fill="#2e8be8"/></g>
<g transform="translate(0 0.5)"><path d="M1040 443.5 H1046 M1040 446 H1045 M1040 448.5 H1046 M1040 451 H1045 M1040 453.5 H1046" stroke="#c8c8c8" stroke-width="1"/><path d="M1036 441.5 L1038.5 444 L1036 446.5 Z" fill="#2e8be8"/></g>
<g transform="translate(0 0.5)"><path d="M1036 473.5 H1041 M1036 476 H1040 M1036 478.5 H1041 M1036 481 H1040 M1036 483.5 H1041" stroke="#c8c8c8" stroke-width="1"/><path d="M1046.5 471.5 L1044 474 L1046.5 476.5 Z" fill="#2e8be8"/></g>
<g transform="translate(0 0.5)"><path d="M1039 502.5 H1047 M1036 505 H1047 M1036 507.5 H1047 M1036 510 H1047 M1036 512.5 H1047" stroke="#c8c8c8" stroke-width="1"/><path d="M1036 500.5 L1038.5 503 L1036 505.5 Z" fill="#2e8be8"/></g>
<rect x="1164.75" y="88.75" width="27.5" height="27.5" rx="1.5" fill="#0d0d0d" stroke="#d0d0d0" stroke-width="1.5"/>
<rect x="1171.5" y="95.5" width="14" height="14" rx="1" fill="none" stroke="#ddd" stroke-width="1.2"/><rect x="1171.5" y="95.5" width="14" height="3" fill="#ddd"/><rect x="1173" y="100" width="4" height="8" fill="#ddd"/><path d="M1179 101 H1184 M1179 103.5 H1182.5 M1179 106 H1181" stroke="#ddd" stroke-width="1"/>
<path d="M1172 124 H1185 M1178.5 124 V131.5" stroke="#ddd" stroke-width="1.6" fill="none"/><path d="M1172 137.5 V131 L1185 137.5 Z" stroke="#ddd" stroke-width="1.2" fill="none"/>
<rect x="1171.5" y="152.5" width="14" height="14" fill="none" stroke="#ddd" stroke-width="1.2"/><circle cx="1175" cy="156" r="1.7" fill="none" stroke="#ddd" stroke-width="1"/><path d="M1172.5 164.5 L1176 161 L1179 163 L1182 159.5 L1185 162" stroke="#ddd" stroke-width="1" fill="none"/>
<circle cx="1178.5" cy="188" r="6.8" fill="none" stroke="#ddd" stroke-width="1.2"/><path d="M1182 184.5 L1179.5 189 L1175 191.5 L1177.5 187 Z" fill="#ddd"/>
<path d="M1172.5 209.5 H1181 L1185 213.5 V223.5 H1172.5 Z M1181 209.5 V213.5 H1185" fill="none" stroke="#ddd" stroke-width="1.2"/>
<path d="M1172 238.5 H1185 M1178.5 238.5 V245" stroke="#ddd" stroke-width="1.6" fill="none"/><path d="M1172.5 252.5 V246.5 L1178 250" stroke="#ddd" stroke-width="1.2" fill="none"/><path d="M1172.5 252.5 H1179" stroke="#ddd" stroke-width="1.2"/><circle cx="1181" cy="248.5" r="2.5" fill="none" stroke="#ddd" stroke-width="1.2"/><path d="M1183 250.5 L1185.5 253" stroke="#ddd" stroke-width="1.3"/>
<path d="M1172.5 266.5 H1181 L1185 270.5 V281 H1172.5 Z M1181 266.5 V270.5 H1185" fill="none" stroke="#ddd" stroke-width="1.2"/><path d="M1175 272 H1178 M1175 275 H1181 M1176 278 H1182" stroke="#ddd" stroke-width="1"/><path d="M1174.5 272 H1177 M1181.5 275 H1182.5" stroke="#e0306a" stroke-width="1"/>
<rect x="1195" y="63" width="1" height="638" fill="#2a2a2a"/><rect x="1197" y="15" width="1" height="734" fill="#151515"/><rect x="1198" y="277" width="1" height="5" fill="#a02a90"/><rect x="1198" y="281.5" width="2" height="1.2" fill="#d04040"/>
<rect x="882.5" y="347.5" width="6" height="67" fill="#474747"/><path d="M884 377.5 L887.5 381 L884 384.5 Z" fill="#111"/>
<circle cx="25" cy="716" r="7.3" fill="#e0454a"/><path d="M22 713 L28 719 M28 713 L22 719" stroke="#fff" stroke-width="1.4"/>
<path d="M254.3 714.5 L257.2 717.5 L260.1 714.5" stroke="#fff" stroke-width="1.5" fill="none"/>
<path d="M276.5 720 L284 712.5 L291.5 720 M305.5 712.5 L313 720 L320.5 712.5" stroke="#aaa" stroke-width="1.4" fill="none"/>
<rect x="462.5" y="709" width="1.3" height="14" fill="#888"/>
<circle cx="480.5" cy="715.5" r="5" fill="none" stroke="#ccc" stroke-width="1.3"/><path d="M484 719 L489.5 724" stroke="#ccc" stroke-width="1.5"/><path d="M475 722.5 H477 M478.5 722.5 H480.5 M482 722.5 H484" stroke="#e0306a" stroke-width="1.3"/>
<rect x="498.5" y="709" width="1.3" height="14" fill="#888"/>
<rect x="17.5" y="737" width="9" height="8.5" rx="1" fill="none" stroke="#999" stroke-width="1"/><rect x="19.5" y="737" width="5" height="3" fill="none" stroke="#999" stroke-width="1"/><rect x="19.5" y="742" width="5" height="3.5" fill="#999"/>
<rect x="35" y="736.5" width="1.3" height="10.5" fill="#777"/>
<rect x="188.5" y="736.5" width="1.3" height="10.5" fill="#777"/>
<rect x="390" y="736.5" width="1.3" height="10.5" fill="#777"/>
<rect x="567" y="736.5" width="1.3" height="10.5" fill="#777"/>
<rect x="742" y="736.5" width="1.3" height="10.5" fill="#777"/>
<rect x="779.5" y="736.5" width="1.3" height="10.5" fill="#777"/>
<rect x="806" y="736.5" width="1.3" height="10.5" fill="#777"/>
<rect x="833" y="736.5" width="1.3" height="10.5" fill="#777"/>
<rect x="945" y="736.5" width="1.3" height="10.5" fill="#777"/>
<rect x="1014.5" y="736.5" width="1.3" height="10.5" fill="#777"/>
<rect x="1146" y="736.5" width="1.3" height="10.5" fill="#777"/>
<path d="M787.5 737.5 H792 M789.8 737.5 V746 M787.5 746 H792 M794 744 V746 H800 V744" stroke="#ddd" stroke-width="1.1" fill="none"/>
<path d="M956.5 737.5 H960.5 L963 740 V746.5 H956.5 Z" fill="none" stroke="#2e8be8" stroke-width="1.2"/>
<path d="M968.5 737.5 H972 L974.5 740 V746.5 H968.5 Z M977 737.5 H980.5 L983 740 V746.5 H977 Z" fill="none" stroke="#bbb" stroke-width="1.2"/>
<path d="M991.5 746.5 V739 Q995 737 998.5 739 Q1002 737 1005.5 739 V746.5 H991.5 M998.5 739 V746.5" fill="none" stroke="#bbb" stroke-width="1.2"/>
<path d="M1024 742.5 H1030.5 M1132 742.5 H1139.5 M1135.75 738.75 V746.25" stroke="#ddd" stroke-width="1.2"/>
<rect x="1038" y="742" width="88" height="1.3" fill="#999"/><rect x="1064.5" y="740" width="1.2" height="5" fill="#999"/><circle cx="1081" cy="742.5" r="4.8" fill="#e8e8e8"/>
<rect x="249.7" y="281" width="12.2" height="19" rx="6.1" fill="#8a8a8a"/>
<rect x="249.7" y="290.0" width="12.2" height="1" fill="#6a6a6a"/>
<path d="M252.79999999999998 287.5 L255.79999999999998 284.5 L258.79999999999995 287.5 M252.79999999999998 293.5 L255.79999999999998 296.5 L258.79999999999995 293.5" stroke="#fff" stroke-width="1.3" fill="none"/>
<rect x="249.7" y="313" width="12.2" height="19" rx="6.1" fill="#8a8a8a"/>
<rect x="249.7" y="322.0" width="12.2" height="1" fill="#6a6a6a"/>
<path d="M252.79999999999998 319.5 L255.79999999999998 316.5 L258.79999999999995 319.5 M252.79999999999998 325.5 L255.79999999999998 328.5 L258.79999999999995 325.5" stroke="#fff" stroke-width="1.3" fill="none"/>
<rect x="249.7" y="345" width="12.2" height="19" rx="6.1" fill="#8a8a8a"/>
<rect x="249.7" y="354.0" width="12.2" height="1" fill="#6a6a6a"/>
<path d="M252.79999999999998 351.5 L255.79999999999998 348.5 L258.79999999999995 351.5 M252.79999999999998 357.5 L255.79999999999998 360.5 L258.79999999999995 357.5" stroke="#fff" stroke-width="1.3" fill="none"/>
<rect x="249.7" y="377" width="12.2" height="19" rx="6.1" fill="#8a8a8a"/>
<rect x="249.7" y="386.0" width="12.2" height="1" fill="#6a6a6a"/>
<path d="M252.79999999999998 383.5 L255.79999999999998 380.5 L258.79999999999995 383.5 M252.79999999999998 389.5 L255.79999999999998 392.5 L258.79999999999995 389.5" stroke="#fff" stroke-width="1.3" fill="none"/>
<rect x="395.5" y="415.2" width="12" height="19" rx="6.0" fill="#8a8a8a"/>
<rect x="395.5" y="424.2" width="12" height="1" fill="#6a6a6a"/>
<path d="M398.5 421.7 L401.5 418.7 L404.5 421.7 M398.5 427.7 L401.5 430.7 L404.5 427.7" stroke="#fff" stroke-width="1.3" fill="none"/>
<rect x="345.3" y="524.5" width="12.4" height="18.8" rx="6.2" fill="#8a8a8a"/>
<rect x="345.3" y="533.4" width="12.4" height="1" fill="#6a6a6a"/>
<path d="M348.5 530.9 L351.5 527.9 L354.5 530.9 M348.5 536.9 L351.5 539.9 L354.5 536.9" stroke="#fff" stroke-width="1.3" fill="none"/>
<rect x="345.3" y="556.6" width="12.4" height="18.8" rx="6.2" fill="#8a8a8a"/>
<rect x="345.3" y="565.5" width="12.4" height="1" fill="#6a6a6a"/>
<path d="M348.5 563.0 L351.5 560.0 L354.5 563.0 M348.5 569.0 L351.5 572.0 L354.5 569.0" stroke="#fff" stroke-width="1.3" fill="none"/>
<rect x="750.8" y="312.5" width="12.4" height="19" rx="6.2" fill="#555"/>
<rect x="750.8" y="321.5" width="12.4" height="1" fill="#6a6a6a"/>
<path d="M754.0 319.0 L757.0 316.0 L760.0 319.0 M754.0 325.0 L757.0 328.0 L760.0 325.0" stroke="#9a9a9a" stroke-width="1.3" fill="none"/>
<path d="M755 233.5 L757.7 230.8 L760.4 233.5 M755 236.5 L757.7 239.2 L760.4 236.5" stroke="#fff" stroke-width="1.2" fill="none"/>
<path d="M755 262.0 L757.7 259.3 L760.4 262.0 M755 265.0 L757.7 267.7 L760.4 265.0" stroke="#fff" stroke-width="1.2" fill="none"/>
<path d="M755 291.0 L757.7 288.3 L760.4 291.0 M755 294.0 L757.7 296.7 L760.4 294.0" stroke="#fff" stroke-width="1.2" fill="none"/></svg>
</body></html>
